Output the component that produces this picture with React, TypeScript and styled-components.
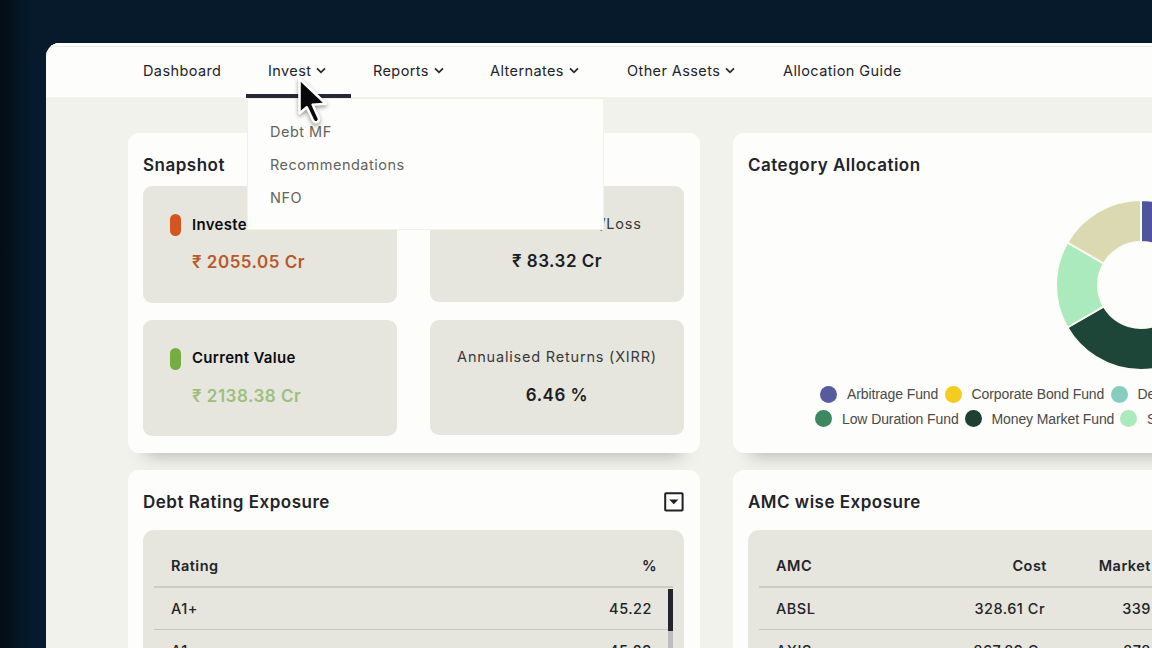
import React from "react";
import styled, { createGlobalStyle } from "styled-components";

const INK = "#23232a";
const PANEL = "#e6e6de";

const GlobalStyle = createGlobalStyle`
  * { box-sizing: border-box; }
  html, body { margin: 0; padding: 0; overflow: hidden; }
  body { background: #061827; font-family: Inter, "Liberation Sans", sans-serif; color: ${INK}; }
`;

const Desktop = styled.div`
  width: 1152px;
  height: 648px;
  padding: 43px 0 0 46px;
  overflow: hidden;
  background: linear-gradient(90deg, #030d14 0, #061a2b 30px, #061a2b 100%);
`;

const Window = styled.div`
  position: relative;
  width: 1106px;
  height: 605px;
  overflow: hidden;
  border-top-left-radius: 14px;
  background: #f2f2ec;
`;

const NavBar = styled.nav`
  display: flex;
  height: 54px;
  padding-left: 75px;
  background: #fdfdfb;
  box-shadow: inset 0 3px 0 #fdfdfb, inset 0 4px 0 #ebebe4;
`;

const NavItem = styled.div<{ $w: number; $active?: boolean }>`
  display: flex;
  flex: none;
  align-items: center;
  width: ${(p) => p.$w}px;
  height: 55px;
  padding: 4px 0 0 22px;
  gap: 5px;
  font-size: 14.5px;
  border-bottom: 4px solid ${(p) => (p.$active ? "#27273a" : "transparent")};
`;

const NavLabel = styled.span<{ $ls: number }>`
  white-space: nowrap;
  letter-spacing: ${(p) => p.$ls}px;
`;

const Dropdown = styled.ul`
  position: absolute;
  z-index: 2;
  left: 201px;
  top: 55px;
  width: 357px;
  height: 132px;
  margin: 0;
  padding: 17px 0 0 22px;
  list-style: none;
  background: #fdfdfb;
  border: 1px solid #f1f1e4;
  border-top-color: #efefdd;
`;

const DropdownItem = styled.li<{ $ls: number }>`
  height: 33px;
  line-height: 32px;
  font-size: 14.5px;
  letter-spacing: ${(p) => p.$ls}px;
  color: #63635c;
`;

const Pointer = styled.svg`
  position: absolute;
  z-index: 3;
  left: 246px;
  top: 29px;
  filter: drop-shadow(0 2px 2px rgba(0, 0, 0, 0.4));
`;

const Board = styled.main`
  display: grid;
  grid-template-columns: 572px 572px;
  grid-template-rows: 320px 320px;
  gap: 17px 33px;
  padding: 36px 0 0 82px;
`;

const Card = styled.section`
  padding: 0 16px 0 15px;
  background: #fdfdfb;
  border-radius: 11px;
  box-shadow: 0 20px 16px -18px rgba(90, 90, 90, 0.42);
`;

const CardHead = styled.header<{ $h: number }>`
  display: flex;
  align-items: center;
  justify-content: space-between;
  height: ${(p) => p.$h}px;
  padding-top: ${(p) => (p.$h > 55 ? 4 : 10)}px;
`;

const CardTitle = styled.h2<{ $ls: number }>`
  margin: 0;
  font-size: 17px;
  font-weight: 600;
  white-space: nowrap;
  letter-spacing: ${(p) => p.$ls}px;
`;

const StatGrid = styled.div`
  display: grid;
  grid-template-columns: 254px 254px;
  grid-template-rows: 116px 116px;
  gap: 17.5px 33px;
`;

const Stat = styled.div<{ $centered?: boolean }>`
  display: flex;
  flex-direction: column;
  height: ${(p) => (p.$centered ? 115.5 : 116.5)}px;
  padding: ${(p) => (p.$centered ? "23px 0 0" : "24px 0 0 27px")};
  align-items: ${(p) => (p.$centered ? "center" : "flex-start")};
  gap: 10px;
  border-radius: 9px;
  background: ${PANEL};
`;

const StatLabel = styled.div<{ $ls: number; $strong?: boolean }>`
  display: flex;
  align-items: center;
  gap: 11px;
  height: 28px;
  font-size: ${(p) => (p.$strong ? 15 : 14.5)}px;
  font-weight: ${(p) => (p.$strong ? 600 : 400)};
  color: ${(p) => (p.$strong ? "#0c0c10" : "#38383c")};
  letter-spacing: ${(p) => p.$ls}px;
  white-space: nowrap;
`;

const Pill = styled.span<{ $c: string }>`
  width: 11px;
  height: 22px;
  border-radius: 6px;
  margin-top: 2px;
  background: ${(p) => p.$c};
`;

const StatValue = styled.div<{ $c?: string; $ls: number; $indent?: boolean }>`
  height: 28px;
  line-height: 28px;
  padding-left: ${(p) => (p.$indent ? 22 : 0)}px;
  font-size: 17px;
  font-weight: 600;
  color: ${(p) => p.$c || "#1c1c24"};
  letter-spacing: ${(p) => p.$ls}px;
  white-space: nowrap;
`;

const ChartArea = styled.div`
  height: 196px;
  padding: 14px 0 0 308px;
`;

const LegendRow = styled.div<{ $left: number }>`
  display: flex;
  align-items: center;
  height: 24.5px;
  padding-left: ${(p) => p.$left}px;
  font-family: "Liberation Sans", sans-serif;
  font-size: 14px;
  color: #4a4a48;
`;

const LegendItem = styled.span<{ $w: number }>`
  display: flex;
  flex: none;
  align-items: center;
  gap: 10px;
  width: ${(p) => p.$w}px;
  white-space: nowrap;
  letter-spacing: -0.1px;
`;

const Dot = styled.i<{ $c: string }>`
  flex: none;
  width: 17px;
  height: 17px;
  border-radius: 50%;
  background: ${(p) => p.$c};
`;

const Table = styled.div`
  height: 260px;
  padding: 0 11px;
  border-radius: 11px 11px 0 0;
  background: ${PANEL};
`;

const TableHead = styled.div`
  display: flex;
  height: 58px;
  padding: 15px 16px 0 17px;
  border-bottom: 2px solid #cbcbc4;
  font-size: 14.5px;
  font-weight: 600;
  line-height: 42px;
  letter-spacing: 0.4px;
`;

const TableBody = styled.div`
  display: flex;
  height: 200px;
`;

const Rows = styled.div`
  flex: 1;
`;

const Row = styled.div`
  display: flex;
  height: 42px;
  padding: 0 16px 0 17px;
  border-bottom: 1px solid #c6c6bf;
  font-size: 14.5px;
  font-weight: 500;
  line-height: 42px;
`;

const Cell = styled.span<{ $w?: number; $right?: boolean; $ls?: number }>`
  ${(p) => (p.$w ? `flex: none; width: ${p.$w}px;` : "flex: 1;")}
  text-align: ${(p) => (p.$right ? "right" : "left")};
  letter-spacing: ${(p) => p.$ls ?? 0.5}px;
  white-space: nowrap;
`;

const ScrollTrack = styled.div`
  width: 5px;
  margin: 1px 0 0;
  background: #bdbdc0;
`;

const ScrollThumb = styled.div`
  height: 42px;
  background: #24242c;
`;

const Chevron = () => (
  <svg width="10" height="7" viewBox="0 0 10 7" fill="none">
    <path d="M1 1.3 5 5.3 9 1.3" stroke="#2a2a30" strokeWidth="1.8" />
  </svg>
);

const MenuSquare = () => (
  <svg width="20" height="20" viewBox="0 0 20 20" fill="none">
    <rect x="1.2" y="1.2" width="17.4" height="17.4" rx="0.8" stroke="#202026" strokeWidth="2" />
    <path d="M5.2 7.5h9.2L9.8 12.3z" fill="#202026" />
  </svg>
);

const slices = [
  { from: 0, to: 60, color: "#50549c" },
  { from: 60, to: 120, color: "#86cdbd" },
  { from: 120, to: 240, color: "#1d4538" },
  { from: 240, to: 300, color: "#aaeabc" },
  { from: 300, to: 360, color: "#dad9b2" },
];

const point = (r: number, deg: number) => {
  const a = ((deg - 90) * Math.PI) / 180;
  return `${85 + r * Math.cos(a)} ${85 + r * Math.sin(a)}`;
};

const Donut = () => (
  <svg width="170" height="170" viewBox="0 0 170 170">
    {slices.map((s) => (
      <path
        key={s.from}
        fill={s.color}
        stroke="#fbfdf4"
        strokeWidth="2"
        d={`M${point(85, s.from)}A85 85 0 0 1 ${point(85, s.to)}L${point(43, s.to)}A43 43 0 0 0 ${point(43, s.from)}Z`}
      />
    ))}
  </svg>
);

const nav = [
  { label: "Dashboard", w: 125, ls: 0.4 },
  { label: "Invest", w: 105, ls: 0.4, menu: true, active: true },
  { label: "Reports", w: 117, ls: 0.4, menu: true },
  { label: "Alternates", w: 137, ls: 0.4, menu: true },
  { label: "Other Assets", w: 156, ls: 0.4, menu: true },
  { label: "Allocation Guide", w: 168, ls: 0.4 },
];

export default function App() {
  return (
    <Desktop>
      <GlobalStyle />
      <Window>
        <NavBar>
          {nav.map((n) => (
            <NavItem key={n.label} $w={n.w} $active={n.active}>
              <NavLabel $ls={n.ls}>{n.label}</NavLabel>
              {n.menu && <Chevron />}
            </NavItem>
          ))}
        </NavBar>
        <Dropdown>
          <DropdownItem $ls={0.5}>Debt MF</DropdownItem>
          <DropdownItem $ls={0.5}>Recommendations</DropdownItem>
          <DropdownItem $ls={0.5}>NFO</DropdownItem>
        </Dropdown>
        <Pointer width="42" height="60" viewBox="0 0 42 60">
          <path
            d="M7.5 6.8V41.5L14.8 35.3L21.2 48.8Q22.8 51.2 25.4 49.8Q27.8 48.4 26.7 46L20.7 32.8L33.8 31.8Z"
            fill="#08080c"
            stroke="#fff"
            strokeWidth="2.6"
            strokeLinejoin="round"
          />
        </Pointer>
        <Board>
          <Card>
            <CardHead $h={53}><CardTitle $ls={0.5}>Snapshot</CardTitle></CardHead>
            <StatGrid>
              <Stat>
                <StatLabel $strong $ls={0.3}><Pill $c="#d4551f" />Invested</StatLabel>
                <StatValue $indent $c="#b8592a" $ls={0.5}>₹ 2055.05 Cr</StatValue>
              </Stat>
              <Stat $centered>
                <StatLabel $ls={0.8}>Unrealised Profit/Loss</StatLabel>
                <StatValue $ls={0.5}>₹ 83.32 Cr</StatValue>
              </Stat>
              <Stat>
                <StatLabel $strong $ls={0.3}><Pill $c="#76ad43" />Current Value</StatLabel>
                <StatValue $indent $c="#9dbf7c" $ls={0.5}>₹ 2138.38 Cr</StatValue>
              </Stat>
              <Stat $centered>
                <StatLabel $ls={0.8}>Annualised Returns (XIRR)</StatLabel>
                <StatValue $ls={0.5}>6.46 %</StatValue>
              </Stat>
            </StatGrid>
          </Card>
          <Card>
            <CardHead $h={53}><CardTitle $ls={0.5}>Category Allocation</CardTitle></CardHead>
            <ChartArea><Donut /></ChartArea>
            <LegendRow $left={72}>
              <LegendItem $w={124.5}><Dot $c="#555b9c" />Arbitrage Fund</LegendItem>
              <LegendItem $w={166}><Dot $c="#f4cc20" />Corporate Bond Fund</LegendItem>
              <LegendItem $w={120}><Dot $c="#86cdbd" />De</LegendItem>
            </LegendRow>
            <LegendRow $left={67}>
              <LegendItem $w={149.5}><Dot $c="#3d8860" />Low Duration Fund</LegendItem>
              <LegendItem $w={155.5}><Dot $c="#1d4033" />Money Market Fund</LegendItem>
              <LegendItem $w={120}><Dot $c="#aaeabc" />S</LegendItem>
            </LegendRow>
          </Card>
          <Card>
            <CardHead $h={60}><CardTitle $ls={0.5}>Debt Rating Exposure</CardTitle><MenuSquare /></CardHead>
            <Table>
              <TableHead><Cell>Rating</Cell><Cell $right>%</Cell></TableHead>
              <TableBody>
                <Rows>
                  <Row><Cell>A1+</Cell><Cell $right>45.22</Cell></Row>
                  <Row><Cell>A1+</Cell><Cell $right>45.09</Cell></Row>
                </Rows>
                <ScrollTrack><ScrollThumb /></ScrollTrack>
              </TableBody>
            </Table>
          </Card>
          <Card>
            <CardHead $h={60}><CardTitle $ls={0.5}>AMC wise Exposure</CardTitle></CardHead>
            <Table>
              <TableHead><Cell $w={110}>AMC</Cell><Cell $w={161} $right>Cost</Cell><Cell $w={104} $right>Market</Cell></TableHead>
              <TableBody>
                <Rows>
                  <Row><Cell $w={110}>ABSL</Cell><Cell $w={159} $right>328.61 Cr</Cell><Cell $w={106} $right>339</Cell></Row>
                  <Row><Cell $w={110}>AXIS</Cell><Cell $w={159} $right>267.89 Cr</Cell><Cell $w={106} $right>278</Cell></Row>
                </Rows>
              </TableBody>
            </Table>
          </Card>
        </Board>
      </Window>
    </Desktop>
  );
}
